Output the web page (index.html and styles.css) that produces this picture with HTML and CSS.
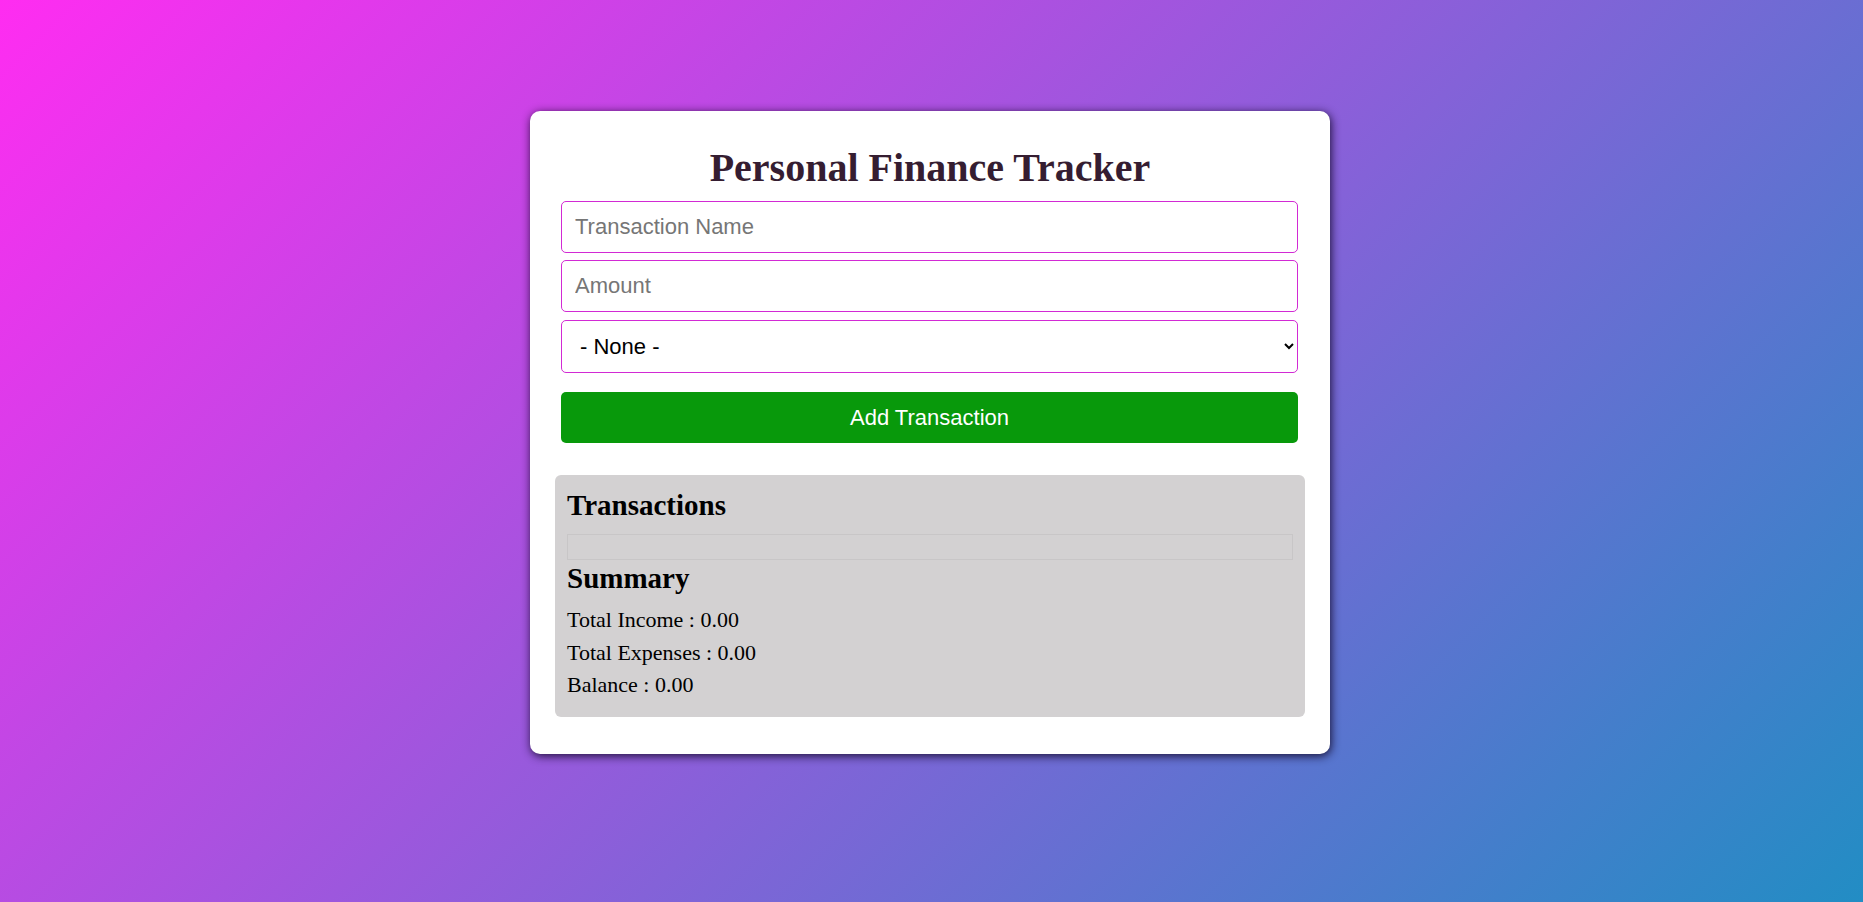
FILE: index.html
```html
<!DOCTYPE html>
<html lang="en">
<head>
<meta charset="utf-8">
<title>Personal Finance Tracker</title>
<link rel="stylesheet" href="styles.css">
</head>
<body>
<main class="card">
  <h1 class="title">Personal Finance Tracker</h1>
  <form class="form">
    <input class="field" type="text" placeholder="Transaction Name">
    <input class="field" type="number" placeholder="Amount">
    <select class="field select">
      <option>- None -</option>
      <option>Income</option>
      <option>Expense</option>
    </select>
    <button class="add-btn" type="button">Add Transaction</button>
  </form>
  <section class="panel">
    <h2 class="panel-title">Transactions</h2>
    <ul class="tx-list"></ul>
    <h2 class="panel-title summary-title">Summary</h2>
    <div class="stats">
      <p class="stat">Total Income : 0.00</p>
      <p class="stat">Total Expenses : 0.00</p>
      <p class="stat">Balance : 0.00</p>
    </div>
  </section>
</main>
</body>
</html>
```

FILE: styles.css
```css
html, body {
  margin: 0;
  height: 100%;
}

body {
  background: linear-gradient(135deg, #ff2cf1 0%, #228dc4 100%);
  font-family: "Liberation Serif", "Times New Roman", serif;
  display: flex;
  justify-content: center;
  align-items: flex-start;
  padding-right: 3px;
  box-sizing: border-box;
}

.card {
  box-sizing: border-box;
  width: 800px;
  margin-top: 111px;
  background: #ffffff;
  border-radius: 10px;
  box-shadow: 1px 2px 10px rgba(15, 5, 35, 0.9);
  padding: 34px 25px 37px;
}

.title {
  margin: 0 0 10px;
  text-align: center;
  font-size: 40px;
  line-height: 46px;
  font-weight: bold;
  color: #351d31;
}

.form {
  display: flex;
  flex-direction: column;
  gap: 7px;
  padding: 0 7px 0 6px;
}

.field {
  box-sizing: border-box;
  width: 100%;
  height: 52px;
  margin: 0;
  padding: 0 13px;
  border: 1px solid #d22ad4;
  border-radius: 5px;
  background: #ffffff;
  font-family: "Liberation Sans", Arial, sans-serif;
  font-size: 22px;
  color: #000000;
  outline: none;
}

.field::placeholder {
  color: #767676;
}

.field[type=number]::-webkit-inner-spin-button,
.field[type=number]::-webkit-outer-spin-button {
  -webkit-appearance: none;
  margin: 0;
}

.select {
  height: 53px;
  padding: 0 10px 0 14px;
  margin-top: 1px;
}

.add-btn {
  box-sizing: border-box;
  height: 51px;
  margin-top: 12px;
  border: none;
  border-radius: 5px;
  background: #08990b;
  color: #ffffff;
  font-family: "Liberation Sans", Arial, sans-serif;
  font-size: 22px;
  cursor: pointer;
}

.panel {
  margin-top: 32px;
  background: #d3d1d2;
  border-radius: 6px;
  padding: 14px 12px 20px;
}

.panel-title {
  margin: 0;
  font-size: 29px;
  line-height: 33px;
  font-weight: bold;
  color: #000000;
}

.tx-list {
  list-style: none;
  margin: 12px 0 2px;
  padding: 12px;
  border: 1px solid #c8c6c7;
}

.summary-title {
  margin-bottom: 12px;
}

.stats {
  display: flex;
  flex-direction: column;
  gap: 7.5px;
}

.stat {
  margin: 0;
  font-size: 22px;
  line-height: 25px;
  color: #000000;
}
```
